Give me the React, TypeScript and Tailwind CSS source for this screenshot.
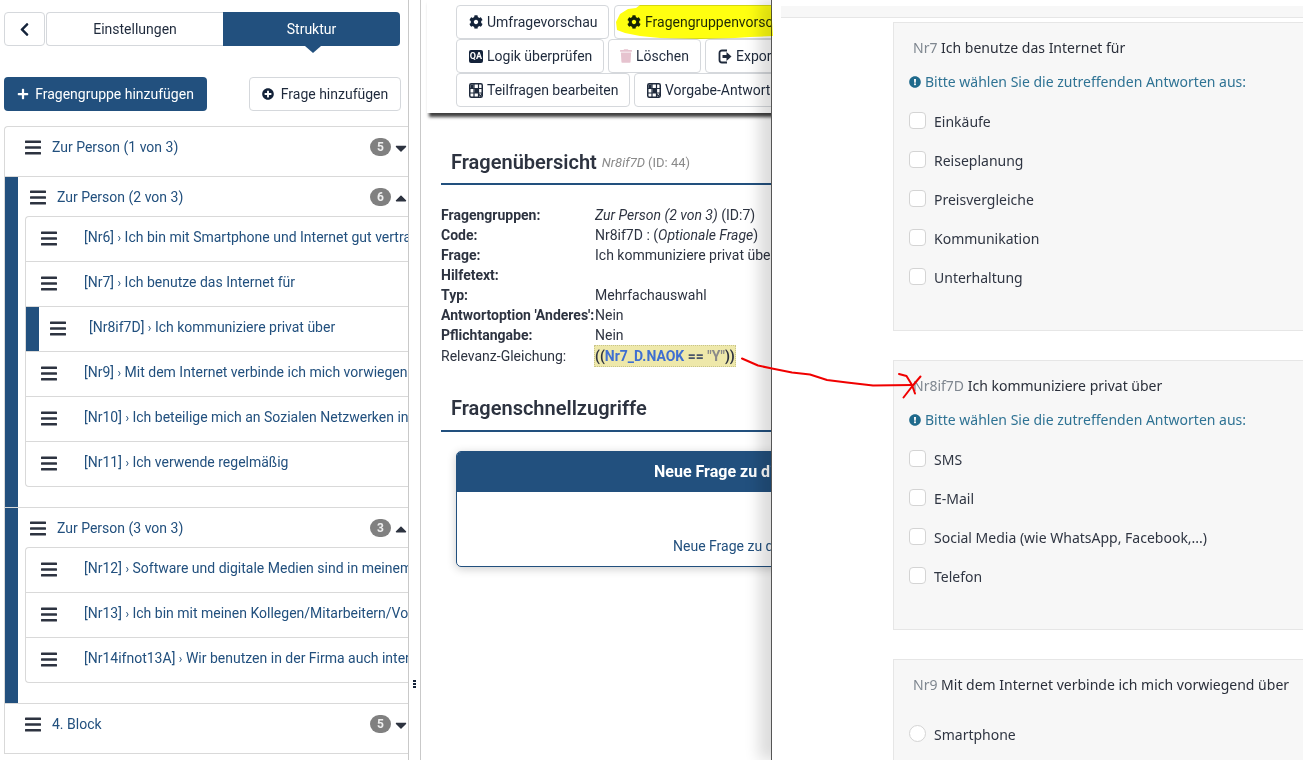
import React from 'react';
import { FaBars, FaCaretDown, FaCaretUp, FaChevronLeft, FaCog, FaExclamationCircle, FaPlus, FaPlusCircle, FaTrash } from 'react-icons/fa';

const roboto = "font-['Roboto',sans-serif]";

const GridIcon = () => (
  <svg width="14" height="15" viewBox="0 0 14 15" className="shrink-0">
    <rect x="0.75" y="0.75" width="12.5" height="13.5" rx="1.5" fill="#fff" stroke="#1f2a3c" strokeWidth="1.5" />
    <path d="M5 1v13M9.500 1v13M1 5.500h12M1 10h12" stroke="#1f2a3c" strokeWidth="1.2" />
    <rect x="5.500" y="6" width="4" height="4" fill="#1f2a3c" />
    <rect x="1.500" y="1.500" width="3" height="3.500" fill="#1f2a3c" />
    <path d="M9.500 11l2 2 2-3" stroke="#1f2a3c" strokeWidth="1.2" fill="none" />
  </svg>
);

const QaIcon = () => (
  <span className="flex h-[13px] w-[14px] shrink-0 items-center justify-center rounded-[2px] bg-[#14233a] text-[9px] font-bold leading-none text-white">QA</span>
);

const ExportIcon = () => (
  <svg width="14" height="15" viewBox="0 0 14 15" className="shrink-0">
    <path d="M9 1.500H4A2.500 2.500 0 0 0 1.500 4v7A2.500 2.500 0 0 0 4 13.500h5" fill="none" stroke="#1f2a3c" strokeWidth="1.8" />
    <path d="M4.500 6h4V3l5 4.500-5 4.500V9h-4z" fill="#1f2a3c" />
  </svg>
);

const ToolButton = ({ icon, label, className }: { icon: React.ReactNode; label: string; className: string }) => (
  <div className={`flex h-[34px] shrink-0 items-center gap-[4px] rounded-[4px] border border-[#d5d8dc] bg-white pl-[12px] text-[14px] text-[#1f2a3c] ${className}`}>
    {icon}
    <span className="whitespace-nowrap">{label}</span>
  </div>
);

const GroupHeader = ({ title, count, open, indent }: { title: string; count: number; open: boolean; indent: boolean }) => (
  <div className={`flex items-center ${indent ? 'h-[39px] pl-[12px] pt-[2px]' : 'h-[41px] pl-[20px]'}`}>
    <FaBars className="h-[19px] w-[16px] shrink-0 text-[#2d3340]" />
    <span className="ml-[11px] text-[14px] text-[#22507e]">{title}</span>
    <span className={`ml-auto flex h-[18px] w-[21px] items-center justify-center rounded-full bg-[#808080] text-[12px] font-bold text-[#eee] ${indent ? 'mb-[2px]' : 'mb-[1px]'}`}>{count}</span>
    <span className="ml-[3px] flex w-[14px] justify-center text-[#2d3340]">
      {open ? <FaCaretUp className="mt-[1px] h-[18px] w-[12px]" /> : <FaCaretDown className="h-[18px] w-[12px]" />}
    </span>
  </div>
);

const QuestionRow = ({ code, text, active }: { code: string; text: string; active?: boolean }) => (
  <div className="flex h-[45px] items-center overflow-hidden border-b border-[#d9d9d9] pb-[2px] last:h-[44px] last:border-b-0">
    {active && <div className="-mb-[2px] w-[13px] shrink-0 self-stretch bg-[#22507e]" />}
    <FaBars className={`h-[19px] w-[16px] shrink-0 text-[#2d3340] ${active ? 'ml-[11px]' : 'ml-[15px]'}`} />
    <span className={`mb-[2px] whitespace-nowrap text-[14px] text-[#22507e] ${active ? 'ml-[23px]' : 'ml-[27px]'}`}>
      [{code}] <span className="text-[12px]">›</span> {text}
    </span>
  </div>
);

const Group = ({ title, count, children, height }: { title: string; count: number; children: React.ReactNode; height: string }) => (
  <div className={`flex border-b border-[#d9d9d9] ${height}`}>
    <div className="w-[13px] shrink-0 bg-[#22507e]" />
    <div className="min-w-0 flex-1">
      <GroupHeader title={title} count={count} open indent />
      <div className="ml-[7px] overflow-hidden rounded-l-[4px] border border-r-0 border-[#d9d9d9]">{children}</div>
    </div>
  </div>
);

const Sidebar = () => (
  <aside className={`h-[760px] w-[409px] shrink-0 overflow-hidden border-r border-[#c9c9c9] pl-[4px] pt-[12px] ${roboto}`}>
    <div className="flex h-[34px] w-[396px]">
      <div className="flex w-[41px] items-center justify-center rounded-[4px] border border-[#d5d8dc] text-[#14233a]">
        <FaChevronLeft className="h-[15px] w-[15px]" />
      </div>
      <div className="ml-[1px] flex w-[177px] items-center justify-center rounded-l-[4px] border border-r-0 border-[#d5d8dc] text-[14px] text-[#1f2a3c]">Einstellungen</div>
      <div className="relative flex w-[177px] items-center justify-center rounded-r-[4px] bg-[#22507e] text-[14px] text-white">
        Struktur
        <div className="absolute left-[82px] top-[34px] h-0 w-0 border-x-[8px] border-t-[7px] border-x-transparent border-t-[#22507e]" />
      </div>
    </div>
    <div className="mt-[31px] flex h-[34px] w-[397px] justify-between">
      <div className="flex w-[203px] items-center justify-center gap-[6px] rounded-[4px] bg-[#22507e] text-[14px] text-white">
        <FaPlus className="h-[12px] w-[12px]" />
        Fragengruppe hinzufügen
      </div>
      <div className="flex w-[152px] items-center justify-center gap-[7px] rounded-[4px] border border-[#d5d8dc] text-[14px] text-[#1f2a3c]">
        <FaPlusCircle className="h-[12px] w-[12px] text-[#14233a]" />
        Frage hinzufügen
      </div>
    </div>
    <div className="mt-[15px] overflow-hidden rounded-tl-[4px] border-l border-t border-[#d9d9d9]">
      <div className="h-[50px] border-b border-[#d9d9d9]">
        <GroupHeader title="Zur Person (1 von 3)" count={5} open={false} indent={false} />
      </div>
      <Group title="Zur Person (2 von 3)" count={6} height="h-[331px]">
        <QuestionRow code="Nr6" text="Ich bin mit Smartphone und Internet gut vertraut und nutze beides" />
        <QuestionRow code="Nr7" text="Ich benutze das Internet für" />
        <QuestionRow code="Nr8if7D" text="Ich kommuniziere privat über" active />
        <QuestionRow code="Nr9" text="Mit dem Internet verbinde ich mich vorwiegend über" />
        <QuestionRow code="Nr10" text="Ich beteilige mich an Sozialen Netzwerken in folgender Form" />
        <QuestionRow code="Nr11" text="Ich verwende regelmäßig" />
      </Group>
      <Group title="Zur Person (3 von 3)" count={3} height="h-[196px]">
        <QuestionRow code="Nr12" text="Software und digitale Medien sind in meinem Alltag wichtig" />
        <QuestionRow code="Nr13" text="Ich bin mit meinen Kollegen/Mitarbeitern/Vorgesetzten vernetzt" />
        <QuestionRow code="Nr14ifnot13A" text="Wir benutzen in der Firma auch interne Systeme" />
      </Group>
      <div className="h-[50px] border-b border-[#d9d9d9]">
        <GroupHeader title="4. Block" count={5} open={false} indent={false} />
      </div>
    </div>
  </aside>
);

const DetailRow = ({ label, children, plain }: { label: string; children?: React.ReactNode; plain?: boolean }) => (
  <div className={`flex items-center whitespace-nowrap text-[14px] text-[#2d3340] ${plain ? 'h-[22px]' : 'h-[20px]'}`}>
    <span className={`w-[154px] shrink-0 ${plain ? '' : 'font-bold'}`}>{label}</span>
    {children}
  </div>
);

const Center = () => (
  <main className={`h-[760px] min-w-0 flex-1 overflow-hidden ${roboto}`}>
    <div className="ml-[11px] h-[760px] w-[700px] border-l border-[#c9c9c9] pl-[6px]">
      <div className="h-[113px] w-[400px] pl-[29px] pt-[5px] shadow-[2px_4px_3px_rgba(30,30,30,0.85)]">
        <div className="flex gap-[5px]">
          <ToolButton icon={<FaCog className="h-[14px] w-[14px] text-[#14233a]" />} label="Umfragevorschau" className="w-[153px]" />
          <ToolButton icon={<FaCog className="h-[14px] w-[14px] text-[#14233a]" />} label="Fragengruppenvorschau" className="w-[200px]" />
        </div>
        <div className="flex gap-[4px]">
          <ToolButton icon={<QaIcon />} label="Logik überprüfen" className="w-[148px]" />
          <ToolButton icon={<FaTrash className="-ml-[1px] h-[14px] w-[12px] text-[#e6c3cf]" />} label="Löschen" className="w-[93px]" />
          <ToolButton icon={<ExportIcon />} label="Exportieren" className="w-[120px]" />
        </div>
        <div className="flex gap-[4px]">
          <ToolButton icon={<GridIcon />} label="Teilfragen bearbeiten" className="w-[174px]" />
          <ToolButton icon={<GridIcon />} label="Vorgabe-Antworten bearbeiten" className="w-[240px]" />
        </div>
      </div>
      <div className="ml-[14px] mt-[37px] w-[330px]">
        <div className="flex h-[35px] items-center border-b-2 border-[#22507e] pb-[10px] pl-[10px]">
          <h2 className="text-[20px] font-semibold text-[#2d3340]">Fragenübersicht</h2>
          <span className="ml-[5px] mt-[3px] text-[13px] italic text-[#8a8a8a]">Nr8if7D</span>
          <span className="ml-[3px] mt-[3px] text-[13px] text-[#8a8a8a]">(ID: 44)</span>
        </div>
        <div className="mt-[20px] overflow-hidden">
          <DetailRow label="Fragengruppen:"><span><i>Zur Person (2 von 3)</i> (ID:7)</span></DetailRow>
          <DetailRow label="Code:"><span>Nr8if7D : (<i>Optionale Frage</i>)</span></DetailRow>
          <DetailRow label="Frage:">Ich kommuniziere privat über</DetailRow>
          <DetailRow label="Hilfetext:" />
          <DetailRow label="Typ:">Mehrfachauswahl</DetailRow>
          <DetailRow label="Antwortoption 'Anderes':">Nein</DetailRow>
          <DetailRow label="Pflichtangabe:">Nein</DetailRow>
          <DetailRow label="Relevanz-Gleichung:" plain>
            <span className="-ml-[1px] h-[22px] border border-dotted border-[#c8c48a] bg-[#eee8aa] font-bold leading-[20px]">
              ((<span className="text-[#3f6fd1]">Nr7_D.NAOK</span> <span className="text-[#4a5568]">==</span> <span className="text-[#8a8a8a]">"Y"</span>))
            </span>
          </DetailRow>
        </div>
        <div className="mt-[30px] flex h-[35px] items-center border-b-2 border-[#22507e] pb-[12px] pl-[10px]">
          <h2 className="text-[20px] font-semibold text-[#2d3340]">Fragenschnellzugriffe</h2>
        </div>
        <div className="ml-[15px] mt-[19px] h-[116px] w-[500px] overflow-hidden rounded-[5px] border border-[#22507e] shadow-[0_2px_10px_rgba(0,0,0,0.2)]">
          <div className="flex h-[40px] items-center bg-[#22507e] pl-[197px] text-[16px] font-bold text-white">Neue Frage zu dieser Gruppe</div>
          <div className="pl-[216px] pt-[44px] text-[14px] text-[#22507e]">Neue Frage zu dieser Gruppe</div>
        </div>
      </div>
    </div>
  </main>
);

const Option = ({ label, round }: { label: string; round?: boolean }) => (
  <div className="flex h-[39px] items-center">
    <div className={`-mt-[3px] h-[17px] w-[17px] border border-[#d4d4d4] bg-white ${round ? 'rounded-full' : 'rounded-[4px]'}`} />
    <span className="ml-[8px] text-[14px] text-[#2f3542]">{label}</span>
  </div>
);

const Hint = () => (
  <div className="flex items-center gap-[4px] text-[14px] text-[#2f7394]">
    <FaExclamationCircle className="h-[12px] w-[12px] text-[#1f6a8c]" />
    Bitte wählen Sie die zutreffenden Antworten aus:
  </div>
);

const QuestionCard = ({ code, title, options, height, round, hint = true }: { code: string; title: string; options: string[]; height: string; round?: boolean; hint?: boolean }) => (
  <section className={`w-[420px] border border-r-0 border-[#e6e6e6] bg-[#f7f7f7] pl-[15px] ${height}`}>
    <div className="pl-[4px] pt-[15px] text-[14px] leading-[20px] text-[#2a2f3a]">
      <span className="text-[#7f8790]">{code}</span> {title}
    </div>
    {hint && <div className="mt-[13px]"><Hint /></div>}
    <div className={hint ? 'mt-[10px]' : 'mt-[20px]'}>
      {options.map((o) => <Option key={o} label={o} round={round} />)}
    </div>
  </section>
);

const PreviewPanel = () => (
  <div className="absolute left-[771px] top-0 h-[760px] w-[532px] overflow-hidden border-l border-[#555] bg-white font-['Noto_Sans',sans-serif] shadow-[-12px_0_14px_rgba(0,0,0,0.14)]">
    <div className="ml-[9px] mt-[6px] h-[12px] border-b border-[#e6e6e6] bg-[#f7f7f7]" />
    <div className="ml-[121px] mt-[4px] flex flex-col gap-[29px]">
      <QuestionCard code="Nr7" title="Ich benutze das Internet für" height="h-[309px]" options={['Einkäufe', 'Reiseplanung', 'Preisvergleiche', 'Kommunikation', 'Unterhaltung']} />
      <QuestionCard code="Nr8if7D" title="Ich kommuniziere privat über" height="h-[270px]" options={['SMS', 'E-Mail', 'Social Media (wie WhatsApp, Facebook,...)', 'Telefon']} />
      <QuestionCard code="Nr9" title="Mit dem Internet verbinde ich mich vorwiegend über" height="h-[200px]" round hint={false} options={['Smartphone']} />
    </div>
  </div>
);

const Annotations = () => (
  <svg width="1303" height="760" viewBox="0 0 1303 760" className="pointer-events-none absolute left-0 top-0">
    <path d="M616 22L620 14L628 9L636 8L640 5L700 5L771 5L773 36L750 37L735 38L700 39L660 38L640 36L625 33L617 30Z" fill="#ffff10" style={{ mixBlendMode: 'multiply' }} />
    <g fill="none" stroke="#f00000" strokeWidth="2" strokeLinecap="round" strokeLinejoin="round">
      <path d="M742 358.500L758 365.500L772 368.500L792 372.500L810 374.500L827 380L847 382.500L873 385.500L912 385" />
      <path d="M899 374L906.500 376L912 385L915 393.500" />
      <path d="M920.500 376.500L912 386.500L903.500 397.500" />
    </g>
  </svg>
);

export default function App() {
  return (
    <div className="relative flex h-[760px] w-[1303px] overflow-hidden bg-white">
      <Sidebar />
      <Center />
      <PreviewPanel />
      <div className="absolute left-[413px] top-[680px] flex flex-col gap-[1px]">
        <span className="h-[2px] w-[3px] bg-[#14233a]" />
        <span className="h-[2px] w-[3px] bg-[#14233a]" />
        <span className="h-[2px] w-[3px] bg-[#14233a]" />
      </div>
      <Annotations />
    </div>
  );
}
